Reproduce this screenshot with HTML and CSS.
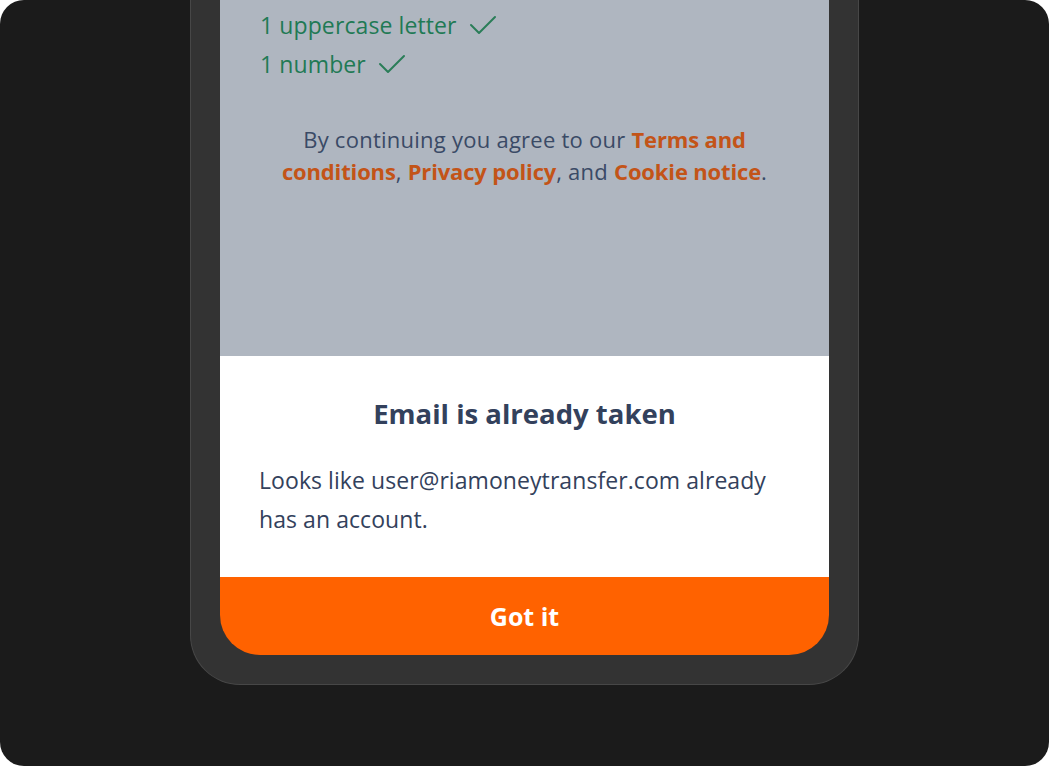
FILE: index.html
```html
<!DOCTYPE html>
<html lang="en">
<head>
<meta charset="utf-8">
<title>Email is already taken</title>
<link rel="stylesheet" href="styles.css">
</head>
<body>
<div class="stage">
  <div class="phone">
    <div class="screen">
      <div class="form">
        <ul class="rules">
          <li class="rule">1 uppercase letter
            <svg class="check" viewBox="0 0 28 20" width="28" height="20"><path d="M2 10 L10 18 L26 2" fill="none" stroke="currentColor" stroke-width="2" stroke-linecap="round" stroke-linejoin="round"/></svg>
          </li>
          <li class="rule">1 number
            <svg class="check" viewBox="0 0 28 20" width="28" height="20"><path d="M2 10 L10 18 L26 2" fill="none" stroke="currentColor" stroke-width="2" stroke-linecap="round" stroke-linejoin="round"/></svg>
          </li>
        </ul>
        <p class="terms">By continuing you agree to our <a class="link">Terms and</a><br><a class="link">conditions</a>, <a class="link">Privacy policy</a>, and <a class="link">Cookie notice</a>.</p>
      </div>
      <div class="dialog">
        <h2 class="dialog-title">Email is already taken</h2>
        <p class="dialog-text">Looks like user@riamoneytransfer.com already<br>has an account.</p>
      </div>
      <button class="cta">Got it</button>
    </div>
  </div>
</div>
</body>
</html>
```

FILE: styles.css
```css
* { box-sizing: border-box; }
html, body { margin: 0; padding: 0; background: #ffffff; }
body { font-family: "Open Sans", "Noto Sans", sans-serif; }

.stage {
  width: 1049px;
  height: 766px;
  background: #1b1b1b;
  border-radius: 24px;
  overflow: hidden;
  display: flex;
  justify-content: center;
  align-items: flex-start;
}

.phone {
  width: 669px;
  height: 685px;
  background: #333333;
  border: 1px solid #474747;
  border-top: none;
  border-radius: 0 0 50px 50px;
  padding: 0 29px 29px;
}

.screen {
  height: 655px;
  border-radius: 0 0 40px 40px;
  overflow: hidden;
  display: flex;
  flex-direction: column;
}

.form {
  height: 356px;
  background: #afb6c0;
  padding: 5px 40px 0;
}

.rules { list-style: none; margin: 0; padding: 0; }
.rule {
  display: flex;
  align-items: center;
  gap: 12px;
  height: 39px;
  font-size: 23px;
  letter-spacing: 0.1px;
  color: #1f7a55;
}
.check { color: #2a7d58; }

.terms {
  margin: 40px 0 0;
  text-align: center;
  font-size: 22px;
  letter-spacing: 0.25px;
  line-height: 32px;
  color: #3a4a66;
}
.link { color: #c35418; font-weight: 700; letter-spacing: -0.15px; }

.dialog {
  height: 221px;
  background: #ffffff;
  padding: 40px 39px 0;
  color: #33415c;
}
.dialog-title {
  margin: 0;
  text-align: center;
  font-size: 27.5px;
  line-height: 36px;
  font-weight: 700;
}
.dialog-text {
  margin: 29px 0 0;
  font-size: 23px;
  letter-spacing: 0.07px;
  line-height: 39px;
}

.cta {
  height: 78px;
  border: none;
  background: #ff6200;
  color: #ffffff;
  font-family: inherit;
  font-size: 25px;
  font-weight: 700;
  padding: 0;
  width: 100%;
}
```
